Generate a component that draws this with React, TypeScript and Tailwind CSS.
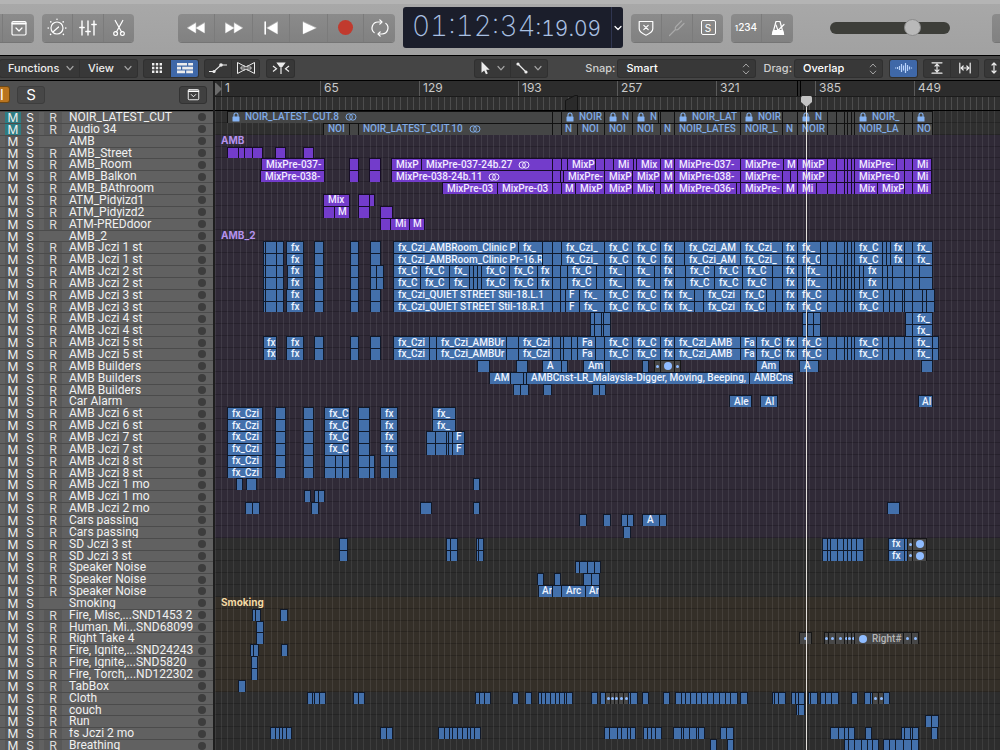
import { useState } from 'react';
import type { ReactNode } from 'react';
import clsx from 'clsx';

type Run = (number | string)[];
type Tone = 'cut' | 'purple' | 'blue';

interface Track {
  name: string;
  folder?: string;
  runs?: Run[];
}

// clip edges are counted from the window's left edge, this is where the lanes start
const TIMELINE_START = 216;
const BARS = [1, 65, 129, 193, 257, 321, 385, 449];

// A run is a chain of touching clips: numbers are the edges, a string names
// the clip that starts at the edge before it.
// "lock:" puts a lock in front, ":st" a stereo mark behind.
const jcziStart: Run[] = [[264, 266, 277, 284], [287, 'fx', 304], [315, 324], [351, 359], [371, 381]];

const jczi1 = (first: Run, cue: string): Run[] => [
  ...jcziStart,
  [...first, 543, 553, 562, 'fx_Czi_', 605, 'fx_C', 633, 'fx_C', 661, 'fx', 675, 685, 'fx_Czi_AM', 741, 'fx_Czi_', 783, 'fx', 798, cue, 821, 828, 837, 845, 848, 852, 855, 'fx_C', 883, 887, 891, 'fx', 905, 913, 'fx_', 933],
];

const jczi2: Run[] = [
  [264, 266, 277, 284], [288, 'fx', 304], [315, 324], [351, 359], [371, 377, 384],
  [394, 'fx_C', 421, 'fx_C', 450, 'fx_', 470, 474, 478, 482, 'fx_C', 510, 'fx_C', 538, 'fx', 553, 561, 568, 'fx_C', 597, 605, 'fx_', 626, 633, 'fx_', 655, 661, 'fx', 675, 686, 'fx_C', 715, 'fx_C', 743, 'fx_C', 773, 783, 'fx', 798, 803, 'fx_', 828, 832, 837, 841, 845, 848, 852, 855, 860, 864, 'fx', 883, 888, 893, 905, 913, 920, 933],
];

const jczi3 = (first: string): Run[] => [
  ...jcziStart,
  [394, first, 553, 561, 566, 'F', 580, 'fx_', 605, 'fx_C', 633, 'fx_C', 661, 'fx', 675, 'fx_', 695, 704, 'fx_Czi', 741, 'fx_C', 767, 776, 783, 'fx', 798, 'fx_C', 828, 837, 845, 848, 852, 855, 'fx_C', 884, 890, 895, 903, 905, 913, 923, 927, 935],
];

const jczi4: Run[] = [[591, 595, 602, 604, 611], [803, 808, 814, 821], [906, 913, 'fx_', 933]];

const jczi5: Run[] = [
  [264, 'fx', 277], [287, 'fx', 304], [315, 324], [351, 359], [371, 381],
  [394, 'fx_Czi', 430, 437, 'fx_Czi_AMBUr', 507, 519, 'fx_Czi', 553, 561, 564, 572, 578, 'Fa', 596, 605, 'fx_C', 633, 'fx_C', 661, 'fx', 675, 'fx_Czi_AMB', 741, 'Fa', 757, 'fx_C', 783, 'fx', 798, 'fx_C', 828, 837, 845, 848, 852, 855, 'fx_C', 883, 889, 895, 905, 913, 'fx_', 933, 939],
];

const jczi67: Run[] = [[228, 'fx_Czi', 263], [276, 286], [304, 314], [325, 'fx_C', 350], [359, 370], [381, 'fx', 398]];
const jczi6: Run[] = [...jczi67, [433, 'fx_', 456]];
const jczi7: Run[] = [...jczi67, [427, 436, 447, 449, 453, 'F', 465]];
const jczi8: Run[] = [[228, 'fx_Czi', 263], [276, 286], [304, 314], [325, 336, 343, 350], [359, 370, 375], [381, 390, 398]];

const sd3: Run[] = [
  [340, 348], [447, 451, 458], [477, 479, 484],
  [823, 828, 831, 838, 844, 848, 852, 857, 864],
  [889, 'fx', 905, 908, 'dot', 913, 'ball', 927],
];

const TRACKS: Track[] = [
  { name: 'NOIR_LATEST_CUT', runs: [[228, 'lock:NOIR_LATEST_CUT.8:st', 553, 562, 'lock:NOIR', 605, 'lock:N', 633, 'lock:N', 659, 661, 675, 'lock:NOIR_LAT', 741, 'lock:NOIR', 783, 798, 'lock:N', 828, 837, 845, 848, 852, 855, 'lock:NOIR_', 905, 913, 'lock:', 933]] },
  { name: 'Audio 34', runs: [[324, 'NOI', 350, 359, 'NOIR_LATEST_CUT.10:st', 553, 562, 'N', 578, 'NOI', 605, 'NOI', 633, 'NOI', 661, 'N', 675, 'NOIR_LATES', 741, 'NOIR_L', 783, 'N', 798, 'NOIR', 828, 837, 845, 848, 852, 855, 'NOIR_LA', 905, 913, 'NO', 933]] },
  { name: 'AMB', folder: 'AMB' },
  { name: 'AMB_Street', runs: [[228, 239, 245, 253, 263], [276, 286], [304, 314]] },
  { name: 'AMB_Room', runs: [[262, 'MixPre-037-', 325], [350, 359], [370, 381], [392, 'MixP', 422, 'MixPre-037-24b.27:st', 553, 562, 568, 'MixP', 596, 605, 614, 'Mi', 634, 637, 'Mix', 661, 'M', 675, 'MixPre-037-', 741, 'MixPre-', 784, 'M', 798, 'MixP', 828, 837, 845, 848, 852, 855, 'MixPre-', 897, 905, 913, 'Mi', 932]] },
  { name: 'AMB_Balkon', runs: [[261, 'MixPre-038-', 325], [350, 359], [370, 381], [392, 'MixPre-038-24b.11:st', 553, 561, 564, 'MixPre-', 605, 'MixP', 633, 'MixP', 661, 'M', 675, 'MixPre-038-', 741, 'MixPre-', 783, 791, 798, 'MixP', 828, 837, 845, 848, 852, 855, 'MixPre-0', 905, 913, 'Mi', 932]] },
  { name: 'AMB_BAthroom', runs: [[443, 'MixPre-03', 498, 'MixPre-03', 553, 562, 'M', 576, 'MixP', 605, 'MixP', 633, 'Mix', 655, 661, 'M', 675, 'MixPre-036-', 737, 741, 'MixPre-', 783, 'M', 798, 'Mi', 817, 828, 837, 845, 848, 852, 855, 'Mix', 878, 'MixP', 905, 913, 'Mi', 932]] },
  { name: 'ATM_Pidyizd1', runs: [[324, 'Mix', 350], [359, 370, 375]] },
  { name: 'ATM_Pidyizd2', runs: [[324, 335, 'M', 350], [359, 370], [381, 393]] },
  { name: 'ATM-PREDdoor', runs: [[381, 391, 'Mi', 410, 'M', 425]] },
  { name: 'AMB_2', folder: 'AMB_2' },
  { name: 'AMB Jczi 1 st', runs: jczi1([394, 'fx_Czi_AMBRoom_Clinic P', 519, 'fx_'], 'fx_') },
  { name: 'AMB Jczi 1 st', runs: jczi1([394, 'fx_Czi_AMBRoom_Clinic Pr-16.R'], 'fx_C') },
  { name: 'AMB Jczi 2 st', runs: jczi2 },
  { name: 'AMB Jczi 2 st', runs: jczi2 },
  { name: 'AMB Jczi 3 st', runs: jczi3('fx_Czi_QUIET STREET Stil-18.L.1') },
  { name: 'AMB Jczi 3 st', runs: jczi3('fx_Czi_QUIET STREET Stil-18.R.1') },
  { name: 'AMB Jczi 4 st', runs: jczi4 },
  { name: 'AMB Jczi 4 st', runs: jczi4 },
  { name: 'AMB Jczi 5 st', runs: jczi5 },
  { name: 'AMB Jczi 5 st', runs: jczi5 },
  { name: 'AMB Builders', runs: [[478, 490], [517, 528], [543, 'A', 562, 568], [584, 'Am', 605, 611], [643, 649], [655, 'dot', 661, 'ball', 675, 'dot', 681], [757, 'Am', 780], [800, 'A', 819], [922, 933]] },
  { name: 'AMB Builders', runs: [[490, 'AM', 511, 524, 527, 'AMBCnst-LR_Malaysia-Digger, Moving, Beeping,', 750, 'AMBCns', 794]] },
  { name: 'AMB Builders', runs: [[514, 521, 529], [544, 552], [593, 600, 606]] },
  { name: 'Car Alarm', runs: [[730, 'Ale', 752], [761, 'Al', 778], [919, 'Al', 933]] },
  { name: 'AMB Jczi 6 st', runs: jczi6 },
  { name: 'AMB Jczi 6 st', runs: jczi6 },
  { name: 'AMB Jczi 7 st', runs: jczi7 },
  { name: 'AMB Jczi 7 st', runs: jczi7 },
  { name: 'AMB Jczi 8 st', runs: jczi8 },
  { name: 'AMB Jczi 8 st', runs: jczi8 },
  { name: 'AMB Jczi 1 mo', runs: [[237, 243], [247, 257], [474, 480]] },
  { name: 'AMB Jczi 1 mo', runs: [[305, 311], [315, 319, 325]] },
  { name: 'AMB Jczi 2 mo', runs: [[246, 253, 260], [312, 319], [421, 432], [474, 480], [888, 900]] },
  { name: 'Cars passing', runs: [[580, 587], [604, 611], [622, 628, 634], [643, 'A', 660, 667]] },
  { name: 'Cars passing', runs: [[624, 631]] },
  { name: 'SD Jczi 3 st', runs: sd3 },
  { name: 'SD Jczi 3 st', runs: sd3 },
  { name: 'Speaker Noise', runs: [[576, 580, 588, 595, 601]] },
  { name: 'Speaker Noise', runs: [[538, 544], [555, 561], [584, 592, 600]] },
  { name: 'Speaker Noise', runs: [[539, 'Ar', 553, 562, 'Arc', 586, 'Ar', 600]] },
  { name: 'Smoking', folder: 'Smoking' },
  { name: 'Fire, Misc,...SND1453 2', runs: [[253, 256, 261], [281, 288]] },
  { name: 'Human, Mi...SND68099', runs: [[257, 264]] },
  { name: 'Right Take 4', runs: [[257, 264], [800, 'dot', 812], [825, 'dot', 829, 'dot', 836, 'dot', 845, 'dot', 848, 'dot', 852, 'dot', 855, 'ball:Right#', 904, 'dot', 912, 'dot', 919]] },
  { name: 'Fire, Ignite,...SND24243', runs: [[251, 254, 259], [282, 288]] },
  { name: 'Fire, Ignite,...SND5820', runs: [[252, 258]] },
  { name: 'Fire, Torch,...ND122302', runs: [[252, 258]] },
  { name: 'TabBox', runs: [[239, 246]] },
  { name: 'Cloth', runs: [[308, 313, 315, 320, 326], [354, 359, 365], [476, 480, 485, 491], [513, 519], [526, 532], [539, 542, 546, 551, 556, 560, 565, 567, 573], [592, 598], [601, 606, 'dot', 611, 'dot', 615, 'dot', 619, 'dot', 624, 'dot', 629, 631, 638], [643, 649], [664, 670], [676, 682, 686, 691, 697, 702, 708, 714, 720, 726, 731, 738], [741, 748], [773, 775, 779, 786], [792, 796, 799, 805], [809, 811, 818], [821, 826, 832, 839], [852, 858], [865, 871, 873, 'dot', 879, 'dot', 884, 890]] },
  { name: 'couch', runs: [[797, 799, 805]] },
  { name: 'Run', runs: [[926, 932, 939]] },
  { name: 'fs Jczi 2 mo', runs: [[271, 276, 280, 283, 287, 292], [381, 387, 393], [439, 445, 450, 453, 458, 463, 468, 471, 475, 481], [605, 610, 618, 622, 628, 631, 636], [644, 648, 652, 656, 662], [674, 682, 684, 690, 697, 699, 705], [721, 727, 734], [831, 839, 845, 849, 855], [866, 872], [902, 905, 911, 913, 919], [932, 938]] },
  { name: 'Breathing', runs: [[711, 717], [728, 734], [845, 849, 855, 862, 868, 873, 879], [884, 890, 896, 904, 912, 919]] },
];

const laneColor = (i: number) => {
  if (i < 2) return 'bg-[#2f2f2f]';
  if (i < 36) return 'bg-[#302a37]';
  if (i < 41) return 'bg-[#2d2d2d]';
  if (i < 49) return 'bg-[#342f28]';
  return 'bg-[#2d2d2d]';
};

const Lock = () => (
  <svg viewBox="0 0 8 10" className="h-[10px] w-2 shrink-0" fill="none">
    <rect x="0.5" y="4.5" width="7" height="5" rx="0.6" fill="#85b4f5" />
    <path d="M2 5V3a2 2 0 0 1 4 0v2" stroke="#85b4f5" strokeWidth="1.1" />
  </svg>
);

const StereoMark = () => (
  <svg viewBox="0 0 12 8" className="h-2 w-3 shrink-0" fill="none" stroke="currentColor">
    <circle cx="4.2" cy="4" r="3.2" />
    <circle cx="7.8" cy="4" r="3.2" />
  </svg>
);

const tones = {
  cut: 'bg-[#454646] text-[#7fabe8] font-medium border-[#111] shadow-[1px_0_0_#111]',
  purple: 'bg-[#733ccb] text-[#f1eaff] font-medium border-[#160d26] shadow-[1px_0_0_#160d26]',
  blue: 'bg-[#4370ab] text-[#eef4ff] font-medium border-[#10192a] shadow-[1px_0_0_#10192a]',
  muted: 'bg-[#474747] text-[#b5b5b5] font-medium border-[#161616] shadow-[1px_0_0_#161616]',
};

const Clip = ({ gap, width, label, tone }: { gap: number; width: number; label?: string; tone: Tone }) => {
  const dot = label === 'dot';
  const ball = label?.startsWith('ball');
  const lock = label?.startsWith('lock:');
  const stereo = label?.endsWith(':st');
  const text = dot ? '' : (label ?? '').replace(/^(lock:|ball:?)/, '').replace(/:st$/, '');
  return (
    <div
      className={clsx(
        "flex shrink-0 items-center overflow-hidden border-l border-t font-['Roboto','Liberation_Sans',sans-serif] text-[10px] leading-[10px] whitespace-nowrap",
        tones[dot || ball ? 'muted' : tone],
        dot && 'justify-center',
        !dot && label && (width < 17 ? 'pl-[3px]' : 'pl-1'),
      )}
      style={{ marginLeft: gap, width }}
    >
      {dot && <span className="size-[3px] shrink-0 rounded-full bg-[#8fbcff]" />}
      {ball && <span className="mr-[5px] size-2 shrink-0 rounded-full bg-[#8fbcff]" />}
      {lock && <span className="mr-[5px] flex"><Lock /></span>}
      {text && <span>{text}</span>}
      {stereo && <span className="ml-[6px]"><StereoMark /></span>}
    </div>
  );
};

const Lane = ({ track, index }: { track: Track; index: number }) => {
  const tone: Tone = index < 2 ? 'cut' : index < 11 ? 'purple' : 'blue';
  const clips: ReactNode[] = [];
  let cursor = TIMELINE_START;
  (track.runs ?? []).forEach((run) => {
    let start: number | null = null;
    let label: string | undefined;
    run.forEach((item) => {
      if (typeof item === 'string') {
        label = item;
        return;
      }
      if (start !== null) {
        clips.push(<Clip key={clips.length} gap={start - cursor} width={item - start} label={label} tone={tone} />);
        cursor = item;
      }
      start = item;
      label = undefined;
    });
  });
  return (
    <div className="flex min-w-0 overflow-hidden">
      {track.folder && (
        <span className={clsx('pl-1.5 text-[10px] leading-[11px] font-bold', track.name === 'Smoking' ? 'text-[#f3d9a4]' : 'text-[#b592ec]')}>
          {track.folder}
        </span>
      )}
      {clips}
    </div>
  );
};

const TrackHeader = ({ track, index }: { track: Track; index: number }) => {
  const [muted, setMuted] = useState(index < 2);
  return (
    <div className="flex min-w-0 items-stretch overflow-hidden border-t border-[#4b4b4b] bg-[#616161] text-[12px] leading-[11px] text-[#f0f0f0]">
      <button onClick={() => setMuted(!muted)} className={clsx('ml-[5px] w-4', muted ? 'bg-[#2e7d83]' : 'bg-[#585858]')}>M</button>
      <button className="w-[18px] bg-[#585858]">S</button>
      {track.folder ? <span className="w-[23px]" /> : <button className="ml-[5px] w-[18px] bg-[#585858] text-[#dcdcdc]">R</button>}
      <span className="ml-[7px] flex-1 font-['Roboto','Liberation_Sans',sans-serif] whitespace-nowrap">{track.name}</span>
      <span className="mr-[7px] size-2 self-center rounded-full bg-[#3d3d3d]" />
    </div>
  );
};

// 99px hold 64 bars, one line every four bars
const GridLines = ({ id, color }: { id: string; color: string }) => (
  <svg className="pointer-events-none absolute inset-0 size-full" aria-hidden="true">
    <defs>
      <pattern id={id} x="6" width="99" height="20" patternUnits="userSpaceOnUse">
        {[0, 6, 12, 19, 25, 31, 37, 43, 50, 56, 62, 68, 74, 80, 87, 93].map((x) => (
          <rect key={x} x={x} y="0" width="1" height="20" fill={color} />
        ))}
      </pattern>
    </defs>
    <rect width="100%" height="100%" fill={`url(#${id})`} />
  </svg>
);

const Icon = ({ children, box = 20, className }: { children: ReactNode; box?: number; className?: string }) => (
  <svg viewBox={`0 0 ${box} ${box}`} className={clsx('shrink-0', className ?? 'size-5')} fill="none" stroke="currentColor" strokeWidth="1.2" strokeLinecap="round" strokeLinejoin="round">
    {children}
  </svg>
);

const Chevron = () => (
  <Icon box={8} className="size-2 text-[#a5a5a5]"><path d="M1 2.5 4 5.8 7 2.5" /></Icon>
);

const TopGroup = ({ children, className }: { children: ReactNode; className?: string }) => (
  <div className={clsx('flex h-7 shrink-0 divide-x divide-[#7b7b7b] overflow-hidden rounded-[4px] bg-linear-to-b from-[#8b8b8b] to-[#818181] text-white shadow-[0_1px_0_#757575]', className)}>
    {children}
  </div>
);

const TopButton = ({ label, width = 'w-[31px]', children }: { label: string; width?: string; children: ReactNode }) => (
  <button aria-label={label} className={clsx('flex items-center justify-center', width)}>{children}</button>
);

const PanelIcon = ({ className }: { className?: string }) => (
  <Icon className={className}>
    <rect x="3" y="3.5" width="14" height="13.5" rx="1.2" />
    <path d="M3.5 5.5h13" strokeWidth="2" />
    <path d="m7 10 3 3 3-3" />
  </Icon>
);

const TransportBar = () => (
  <header className="flex h-[55px] shrink-0 items-center overflow-hidden border-t-4 border-[#b4b4b4] bg-linear-to-b from-[#a8a8a8] to-[#a1a1a1] pb-1">
    <TopGroup className="rounded-l-none">
      <span className="w-[3px]" />
      <TopButton label="Note pads"><PanelIcon /></TopButton>
    </TopGroup>
    <TopGroup className="ml-2">
      <TopButton label="Smart controls">
        <Icon>
          <circle cx="10" cy="10" r="6" />
          <path d="m6.5 13.5 5-4.5" />
          <path d="M10 1.2v.1M3.8 3.8v.1M16.2 3.8v.1M1.2 10v.1M18.8 10v.1M3.6 16.3v.1M16.4 16.3v.1" strokeWidth="1.6" />
        </Icon>
      </TopButton>
      <TopButton label="Mixer">
        <Icon><path d="M4 3v14M10 3v14M16 3v14M1.8 9.5h4.4M7.8 13.5h4.4M13.8 6.5h4.4" strokeWidth="1.4" /></Icon>
      </TopButton>
      <TopButton label="Editors" width="w-[30px]">
        <Icon>
          <circle cx="6.6" cy="15.6" r="1.9" />
          <circle cx="13.4" cy="15.6" r="1.9" />
          <path d="M6.2 2.5 12.6 14M13.8 2.5 7.4 14" />
        </Icon>
      </TopButton>
    </TopGroup>
    <TopGroup className="ml-11">
      <TopButton label="Rewind" width="w-[37px]">
        <Icon><path d="M9.8 5v10L1.5 10zM18.5 5v10L10 10z" fill="currentColor" strokeWidth=".3" /></Icon>
      </TopButton>
      <TopButton label="Forward" width="w-[38px]">
        <Icon><path d="M1.5 5v10l8.5-5zM10.2 5v10l8.3-5z" fill="currentColor" strokeWidth=".3" /></Icon>
      </TopButton>
      <TopButton label="Go to beginning" width="w-[37px]">
        <Icon><path d="M4.2 4v12" strokeWidth="1.6" /><path d="M16.5 4v12L6 10z" fill="currentColor" strokeWidth=".3" /></Icon>
      </TopButton>
      <TopButton label="Play" width="w-[38px]">
        <Icon><path d="M4 4v12l13-6z" fill="currentColor" strokeWidth=".3" /></Icon>
      </TopButton>
      <TopButton label="Record" width="w-[36px]"><span className="size-[15px] rounded-full bg-[#c13a2e]" /></TopButton>
      <TopButton label="Cycle" width="w-[31px]">
        <Icon>
          <path d="M11.5 4H8a6 6 0 0 0-3.8 10.6M8.5 16H12a6 6 0 0 0 3.8-10.6" />
          <path d="M9.8 1.8 12 4 9.8 6.2M10.2 13.8 8 16l2.2 2.2" />
        </Icon>
      </TopButton>
    </TopGroup>
    <div className="ml-2 flex h-[41px] w-[220px] shrink-0 items-stretch rounded-[3px] bg-[#1b1e2b] text-[#a9c0e2]">
      <div className="flex flex-1 items-baseline pl-[9px] leading-[38px] whitespace-nowrap tabular-nums">
        <span className="text-[28px] font-extralight">01:12:34</span>
        <span className="text-[21px] font-light">:19.09</span>
      </div>
      <button aria-label="Display mode" className="flex w-[12px] items-center justify-center border-l border-[#2f3550] text-white">
        <Icon box={8} className="size-2"><path d="M1 2.5 4 5.5 7 2.5" /></Icon>
      </button>
    </div>
    <TopGroup className="ml-2">
      <TopButton label="Replace">
        <Icon>
          <path d="M3.2 3.5h13.6v7.3c0 3-2.6 4.6-6.8 6.4-4.2-1.8-6.8-3.4-6.8-6.4z" />
          <path d="m7.8 7.3 4.4 4.4M12.2 7.3l-4.4 4.4" />
        </Icon>
      </TopButton>
      <TopButton label="Tuner">
        <Icon className="size-5 text-[#a9a9a9]"><path d="M2.5 17.5 8.5 11.5M14.5 3 9 8.5c-1 1-1 2-.5 3 1 .5 2 .5 3-.5L17 5.5" /></Icon>
      </TopButton>
      <TopButton label="Solo" width="w-[30px]">
        <span className="flex size-[15px] items-center justify-center rounded-[2px] border border-white text-[10px] leading-none">S</span>
      </TopButton>
    </TopGroup>
    <TopGroup className="ml-2">
      <TopButton label="Count in"><span className="text-[8px] font-medium">1<span className="text-[10px]">234</span></span></TopButton>
      <TopButton label="Metronome">
        <Icon>
          <path d="M8 3.5h4l3.5 13h-11z" />
          <path d="M5.4 12.5h9.2l1 4H4.4z" fill="currentColor" />
          <path d="M10 12.5 8 7M10 12.5l6-6" />
        </Icon>
      </TopButton>
    </TopGroup>
    <input
      type="range"
      aria-label="Master volume"
      defaultValue={72}
      className="ml-[37px] h-3 w-[120px] shrink-0 appearance-none rounded-full bg-[#3d3e39] [&::-webkit-slider-thumb]:size-[17px] [&::-webkit-slider-thumb]:appearance-none [&::-webkit-slider-thumb]:rounded-full [&::-webkit-slider-thumb]:border [&::-webkit-slider-thumb]:border-[#8a8a8a] [&::-webkit-slider-thumb]:bg-[#b9b9b9]"
    />
    <TopGroup className="ml-[42px]"><TopButton label="More"> </TopButton></TopGroup>
  </header>
);

const BarGroup = ({ children, className }: { children: ReactNode; className?: string }) => (
  <div className={clsx('flex h-[17px] shrink-0 divide-x divide-[#303030] overflow-hidden rounded-[2px] bg-[#383838] text-[#ececec] shadow-[0_0_0_1px_#303030]', className)}>
    {children}
  </div>
);

const BarButton = ({ label, active, children }: { label: string; active?: boolean; children: ReactNode }) => (
  <button aria-label={label} className={clsx('flex w-[27px] items-center justify-center', active && 'bg-[#3f68a8]')}>{children}</button>
);

const BarSelect = ({ id, label, value, width }: { id: string; label: string; value: string; width: string }) => (
  <div className="flex shrink-0 items-center">
    <label htmlFor={id} className="mr-[3px] text-[#d0d0d0]">{label}</label>
    <div className={clsx('relative flex h-[17px] rounded-[2px] bg-[#383838] shadow-[0_0_0_1px_#303030]', width)}>
      <select id={id} defaultValue={value} className="w-full appearance-none bg-transparent pl-2 leading-[17px] text-white outline-none">
        <option>{value}</option>
      </select>
      <svg viewBox="0 0 8 12" className="pointer-events-none absolute top-[3px] right-[5px] h-3 w-2" fill="none" stroke="#a5a5a5">
        <path d="M1 4.2 4 1l3 3.2M1 7.8 4 11l3-3.2" />
      </svg>
    </div>
  </div>
);

const EditBar = () => (
  <nav className="flex h-[25px] shrink-0 items-center overflow-hidden border-t border-black bg-[#454545] text-[11px] font-medium text-[#ececec]">
    <BarGroup>
      <button className="flex w-20 items-center justify-between pr-[5px] pl-2">Functions <Chevron /></button>
      <button className="flex w-[57px] items-center justify-between pr-[5px] pl-2">View <Chevron /></button>
    </BarGroup>
    <BarGroup className="ml-[7px]">
      <BarButton label="Live loops grid">
        <Icon box={12} className="size-3">
          <path d="M1 1h2.4v2.4H1zM4.8 1h2.4v2.4H4.8zM8.6 1H11v2.4H8.6zM1 4.8h2.4v2.4H1zM4.8 4.8h2.4v2.4H4.8zM8.6 4.8H11v2.4H8.6zM1 8.6h2.4V11H1zM4.8 8.6h2.4V11H4.8zM8.6 8.6H11V11H8.6z" fill="currentColor" stroke="none" />
        </Icon>
      </BarButton>
      <BarButton label="Tracks view" active>
        <svg viewBox="0 0 16 12" className="h-3 w-4" fill="currentColor">
          <path d="M0 1h10v2.6H0zM11.2 1H16v2.6h-4.8zM0 4.8h4v2.6H0zM5.2 4.8H16v2.6H5.2zM0 8.6h8v2.6H0zM9.2 8.6H16v2.6H9.2z" />
        </svg>
      </BarButton>
    </BarGroup>
    <BarGroup className="ml-[7px]">
      <BarButton label="Automation">
        <svg viewBox="0 0 20 12" className="h-3 w-5" fill="none" stroke="currentColor" strokeWidth="1.1">
          <path d="M1 9.5h5L13 3h6" />
          <circle cx="6" cy="9.5" r="1.6" fill="currentColor" stroke="none" />
          <circle cx="13" cy="3" r="1.8" fill="currentColor" stroke="none" />
        </svg>
      </BarButton>
      <BarButton label="Flex">
        <svg viewBox="0 0 20 14" className="h-[14px] w-5" fill="none" stroke="currentColor">
          <path d="M1.5 1.5 10 6l8.5-4.5v11L10 8l-8.5 4.5z" />
          <path d="M4 7h2M14 7h2M8 4v6M12 4v6M6 5v4M14 5v4" strokeWidth=".8" />
        </svg>
      </BarButton>
    </BarGroup>
    <BarGroup className="ml-2">
      <BarButton label="Catch playhead">
        <svg viewBox="0 0 18 12" className="h-3 w-[18px]" fill="none" stroke="currentColor" strokeWidth="1.2">
          <path d="m1 4 3.5 2.7L1 9.4M17 4l-3.5 2.7L17 9.4M9 4v8" />
          <path d="M5.5 1h7L10 4.5H8z" fill="currentColor" />
        </svg>
      </BarButton>
    </BarGroup>
    <div className="flex-1" />
    <BarGroup>
      <button aria-label="Pointer tool" className="flex w-9 items-center justify-end gap-[5px] pr-[5px]">
        <Icon box={12} className="size-[14px]"><path d="M3 .5v9.6l2.3-2 1.5 3.3 1.6-.7L7 7.5h3z" fill="currentColor" stroke="none" /></Icon>
        <Chevron />
      </button>
      <button aria-label="Automation tool" className="flex w-9 items-center justify-end gap-[6px] pr-[5px]">
        <Icon box={12} className="size-3">
          <path d="m2 2 8 8" />
          <circle cx="2" cy="2" r="1.6" fill="currentColor" stroke="none" />
          <circle cx="10" cy="10" r="1.6" fill="currentColor" stroke="none" />
        </Icon>
        <Chevron />
      </button>
    </BarGroup>
    <div className="ml-[38px] flex gap-2">
      <BarSelect id="snap" label="Snap:" value="Smart" width="w-[137px]" />
      <BarSelect id="drag" label="Drag:" value="Overlap" width="w-[87px]" />
    </div>
    <BarGroup className="ml-2">
      <BarButton label="Waveform zoom" active>
        <svg viewBox="0 0 18 12" className="h-3 w-[18px]" fill="none" stroke="#b9d3fb">
          <path d="M.5 5.5v1M2.5 5v2M4.5 4v4M6.5 2v8M8.5 3.5v5M10.5 1v10M12.5 3v6M14.5 4.5v3M16.5 5.5v1" strokeWidth="1.2" />
        </svg>
      </BarButton>
    </BarGroup>
    <BarGroup className="ml-[7px]">
      <BarButton label="Vertical auto zoom">
        <Icon box={12} className="size-3"><path d="M1 .8h10M1 11.2h10M6 2.5v7M4 4.2l2-2 2 2M4 7.8l2 2 2-2" /></Icon>
      </BarButton>
      <BarButton label="Horizontal auto zoom">
        <Icon box={12} className="size-3"><path d="M.8 1v10M11.2 1v10M2.5 6h7M4.2 4l-2 2 2 2M7.8 4l2 2-2 2" /></Icon>
      </BarButton>
    </BarGroup>
    <BarGroup className="ml-[7px] w-[15px]">
      <button aria-label="Vertical zoom" className="flex flex-1 items-center justify-end">
        <Icon box={12} className="size-3"><path d="M6 1v10M4 3l2-2 2 2M4 9l2 2 2-2" /></Icon>
      </button>
    </BarGroup>
  </nav>
);

const Ruler = () => (
  <div className="relative h-[30px] overflow-hidden border-b border-black bg-[#2c2c2c]">
    <div className="relative mt-[15px] h-[14px] border-t border-[#1b1b1b] bg-[#303030]">
      <GridLines id="ticks" color="#4d4d4d" />
    </div>
    <div className="absolute inset-0 flex pl-1.5 text-[12px] leading-[13px] text-[#c9c9c9]">
      {BARS.map((bar) => (
        <span key={bar} className="h-[15px] w-[99px] shrink-0 border-l border-[#5a5a5a] pl-[3px]">{bar}</span>
      ))}
    </div>
    <svg viewBox="0 0 7 12" className="absolute top-[2px] left-0 h-3 w-[7px]" fill="#6b6b6b"><path d="M0 0h1l6 6-6 6H0z" /></svg>
    <svg viewBox="0 0 13 16" className="absolute top-[14px] left-[350px] h-4 w-[13px]" fill="#2a2a2a" stroke="#151515">
      <path d="M.5 16V5.5L10 .5h2.5V16" />
    </svg>
    <span className="absolute top-0 left-[582px] h-[15px] w-1 border-x border-black" />
  </div>
);

const App = () => {
  return (
    <div className="flex h-screen flex-col overflow-hidden bg-[#2d2d2d] font-['Inter','Liberation_Sans',sans-serif]">
      <TransportBar />
      <EditBar />
      <main className="-mb-px flex min-h-0 flex-1 border-t border-black">
        <aside className="flex w-[215px] shrink-0 flex-col border-r-2 border-[#1e1e1e] bg-[#505050]">
          <div className="flex h-[30px] shrink-0 items-center border-b border-black pb-[2px] text-white">
            <button aria-label="Mute all" className="h-[17px] w-[10px] rounded-r-[3px] border border-l-0 border-[#6b4715] bg-[#b9741f] text-left text-[14px] leading-[15px]">I</button>
            <button className="ml-[7px] h-[18px] w-7 rounded-[3px] border border-[#3d3d3d] bg-[#474747] text-[15px] leading-4">S</button>
            <button aria-label="Track header options" className="mr-[6px] ml-auto flex h-[18px] w-7 items-center justify-center rounded-[3px] border border-[#333] bg-[#404040]">
              <PanelIcon className="size-[15px]" />
            </button>
          </div>
          <div className="grid min-h-0 flex-1 grid-rows-[repeat(54,minmax(0,1fr))]">
            {TRACKS.map((track, i) => (
              <TrackHeader key={i} track={track} index={i} />
            ))}
          </div>
        </aside>
        <section className="relative flex min-w-0 flex-1 flex-col">
          <Ruler />
          <div className="relative min-h-0 flex-1">
            <div className="grid h-full grid-rows-[repeat(54,minmax(0,1fr))]">
              {TRACKS.map((_, i) => (
                <div key={i} className={clsx('border-b border-black/20', laneColor(i))} />
              ))}
            </div>
            <GridLines id="bars" color="rgba(255,255,255,0.08)" />
            <div className="absolute inset-0 grid grid-rows-[repeat(54,minmax(0,1fr))]">
              {TRACKS.map((track, i) => (
                <Lane key={i} track={track} index={i} />
              ))}
            </div>
          </div>
          <div className="pointer-events-none absolute top-[15px] bottom-0 left-[586px] flex w-[11px] flex-col items-center">
            <svg viewBox="0 0 11 11" className="h-[11px] w-[11px] shrink-0" fill="#c4c4c4"><path d="M0 1.5Q0 0 1.5 0h8Q11 0 11 1.5V6L5.5 11 0 6z" /></svg>
            <span className="w-px flex-1 bg-[#e4e1dc]" />
          </div>
        </section>
      </main>
    </div>
  );
};

export default App;
